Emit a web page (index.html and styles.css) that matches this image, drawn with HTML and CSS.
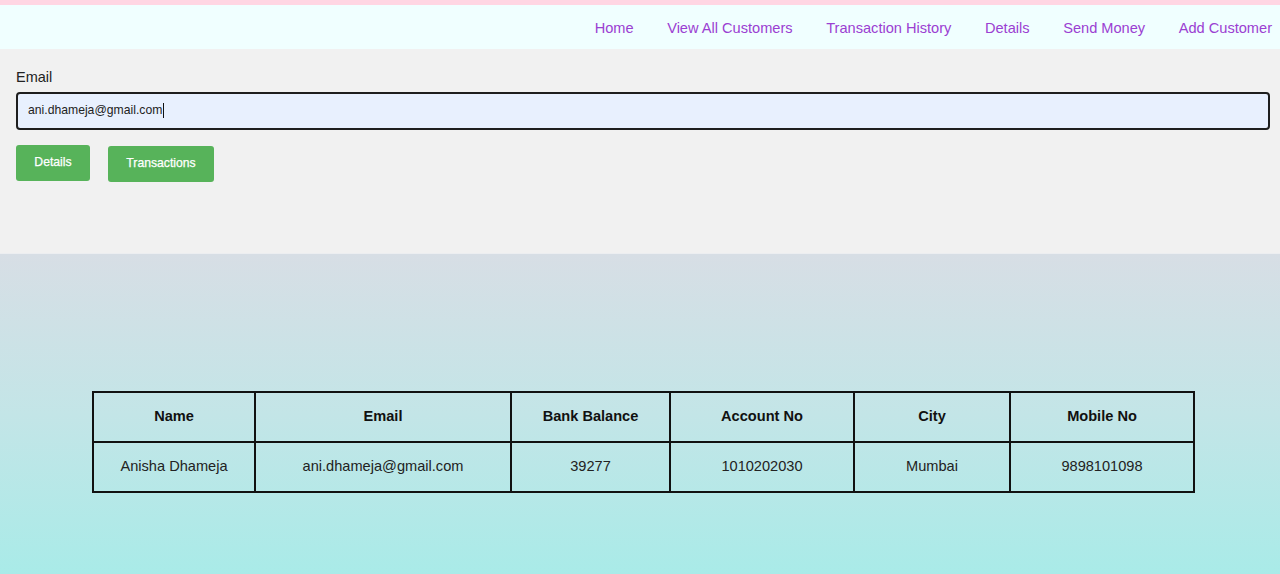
FILE: index.html
```html
<!DOCTYPE html>
<html>
<head>
<meta charset="utf-8">
<link rel="stylesheet" href="styles.css">
</head>
<body>
<div class="topbar"></div>
<nav class="nav">
  <a href="#">Home</a>
  <a href="#">View All Customers</a>
  <a href="#">Transaction History</a>
  <a href="#">Details</a>
  <a href="#">Send Money</a>
  <a href="#">Add Customer</a>
</nav>
<section class="form">
  <label class="label">Email</label>
  <div class="input">ani.dhameja@gmail.com<span class="caret"></span></div>
  <div class="buttons">
    <button class="btn btn-details">Details</button>
    <button class="btn btn-trans">Transactions</button>
  </div>
</section>
<section class="result">
  <table class="table">
    <colgroup>
      <col class="c1"><col class="c2"><col class="c3"><col class="c4"><col class="c5"><col class="c6">
    </colgroup>
    <thead>
      <tr><th>Name</th><th>Email</th><th>Bank Balance</th><th>Account No</th><th>City</th><th>Mobile No</th></tr>
    </thead>
    <tbody>
      <tr><td>Anisha Dhameja</td><td>ani.dhameja@gmail.com</td><td>39277</td><td>1010202030</td><td>Mumbai</td><td>9898101098</td></tr>
    </tbody>
  </table>
</section>
</body>
</html>
```
FILE: styles.css
```css
* { box-sizing: border-box; }
html, body { margin: 0; padding: 0; }
body {
  font-family: "Liberation Sans", Arial, sans-serif;
  color: #222;
  height: 574px;
  overflow: hidden;
  display: flex;
  flex-direction: column;
}
.topbar { height: 5px; background: #ffd6e3; }
.nav {
  height: 44px;
  background: #f0ffff;
  display: flex;
  justify-content: flex-end;
  align-items: center;
  padding-right: 8px;
  gap: 33.6px;
}
.nav a {
  color: #9b40d2;
  text-decoration: none;
  font-size: 14.6px;
  padding-top: 1px;
}
.form {
  height: 205px;
  background: #f1f1f1;
  padding: 19px 10px 0 16px;
  border-bottom: 1px solid #eceef1;
}
.label { display: block; font-size: 14.5px; line-height: 18px; color: #222; }
.input {
  margin-top: 6px;
  height: 38px;
  border: 2px solid #1e1e1e;
  border-radius: 4px;
  background: #e8f0fe;
  font-size: 12.2px;
  padding: 0 0 2px 10px;
  display: flex;
  align-items: center;
  color: #222;
}
.caret { display: inline-block; width: 1px; height: 15px; background: #111; margin-left: 1px; }
.buttons { display: flex; gap: 18px; margin-top: 15px; }
.btn {
  height: 36px;
  border: none;
  border-radius: 3px;
  background: #57b35a;
  color: #fff;
  font-family: "Liberation Sans", Arial, sans-serif;
  font-size: 12.2px;
  font-weight: normal;
  -webkit-text-stroke: 0.25px #fff;
  padding: 0 0 2px;
}
.btn-details { width: 74px; }
.btn-trans { width: 106px; margin-top: 1px; }
.result {
  flex: 1;
  background: linear-gradient(to bottom, #d7dee5 0%, #c3e5e7 50%, #a9ebe8 100%);
  padding-top: 137px;
  padding-left: 92px;
}
.table {
  width: 1101px;
  border-collapse: collapse;
  table-layout: fixed;
  font-size: 14.6px;
}
.c1 { width: 162px; } .c2 { width: 256px; } .c3 { width: 159px; }
.c4 { width: 184px; } .c5 { width: 156px; } .c6 { width: 184px; }
.table th, .table td {
  border: 2px solid #111;
  height: 50px;
  text-align: center;
  color: #222;
  padding: 0 0 2px;
}
.table th { font-weight: bold; color: #111; }
```
